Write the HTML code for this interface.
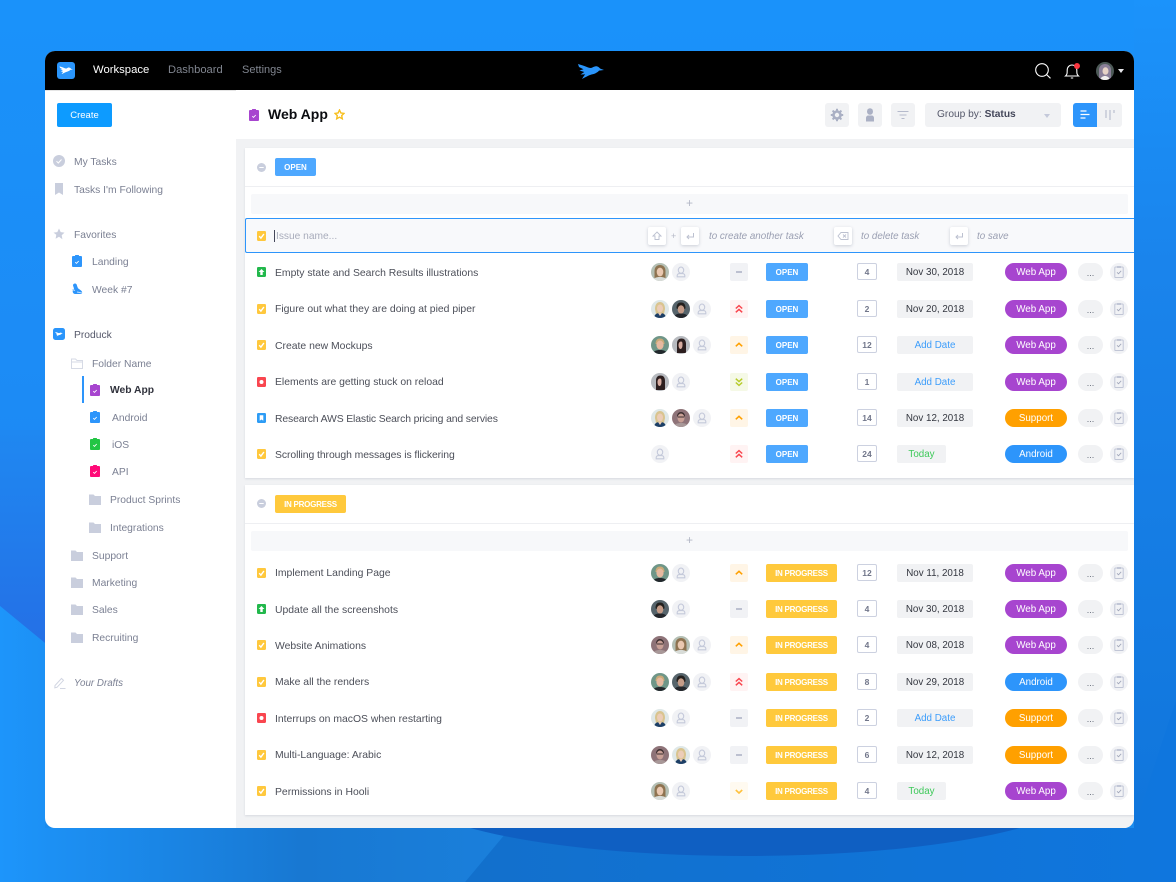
<!DOCTYPE html>
<html lang="en"><head><meta charset="utf-8"><title>Web App</title>
<style>
html,body{margin:0;padding:0}
body{width:1176px;height:882px;position:relative;overflow:hidden;background:#1b92f8;font-family:"Liberation Sans",sans-serif;font-size:10.4px;color:#4a4d57}
.bg{position:absolute;left:0;top:0}
.a{position:absolute}
.card{position:absolute;left:45px;top:51px;width:1089px;height:777px;border-radius:10px;background:#fff;overflow:hidden}
.page{position:absolute;left:0;top:0;width:1176px;height:882px}
.t{position:absolute;white-space:nowrap;line-height:16px}
.side{font-size:10.3px;color:#7b8093}
.side .t{margin-top:2px}
.r{position:absolute;left:0;width:1176px;height:18px}
.r>*{position:absolute}
.n{left:275px;top:2px;line-height:16px;white-space:nowrap;color:#4c4f59;font-size:10.4px}
.r>.d{top:3px}
.s{left:257px;top:4px;width:9px;height:10px}
.av{top:0;width:18px;height:18px}
.pr{left:730px;top:0;width:18px;height:18px;border-radius:2px}
.st{left:766px;top:0;height:18px;line-height:19px;border-radius:2px;color:#fff;font-size:8px;font-weight:bold;text-align:center}
.op{width:42px;background:#4ea8ff}
.ip{width:71px;background:#ffc93c;letter-spacing:-.25px}
.ct{left:857px;top:0;width:18px;height:15px;line-height:16px;border:1.5px solid #ccd1e0;border-radius:2px;text-align:center;color:#71768a;font-size:8.5px;font-weight:bold;background:#fff}
.dt{left:897px;top:0;height:18px;width:76px;line-height:19px;background:#f1f2f4;border-radius:2px;text-align:center;color:#33363f;font-size:9.8px}
.ad{color:#3c9dfb}
.td{color:#3ec95a;width:49px}
.tg{left:1005px;top:0;width:62px;height:18px;line-height:19px;border-radius:9px;color:#fff;text-align:center;font-size:9.8px}
.wa{background:#a745cf}.su{background:#ffa000}.an{background:#2d95fb}
.dd{left:1078px;top:0;width:25px;height:18px;line-height:20px;border-radius:9px;background:#f1f2f4;text-align:center;color:#666b7a;font-size:9px}
.cl{left:1110px;top:0;width:18px;height:18px}
.kb{position:absolute;top:227px;width:18px;height:18px;border-radius:2px;background:#fff;box-shadow:0 1px 3px rgba(60,70,100,.24)}
.hint{position:absolute;top:229px;line-height:16px;font-style:italic;color:#9a9fb2;font-size:9.8px;white-space:nowrap}
.panel{position:absolute;left:245px;width:889px;background:#fff;box-shadow:0 1px 2px rgba(60,70,100,.14)}
.add{position:absolute;left:251px;width:877px;height:20px;background:#f7f8fa;border-radius:2px;color:#b4b8c6;text-align:center;line-height:19px;font-size:12px}
.hb{position:absolute;top:103px;width:24px;height:24px;background:#f1f2f4;border-radius:3px}
</style></head><body>

<svg class="bg" width="1176" height="882" viewBox="0 0 1176 882">
<defs>
<linearGradient id="g0" x1="0" y1="0" x2="0" y2="1"><stop offset="0" stop-color="#1a92fa"/><stop offset=".65" stop-color="#1d88f3"/><stop offset="1" stop-color="#1b8ded"/></linearGradient>
<linearGradient id="g1" gradientUnits="userSpaceOnUse" x1="0" y1="0" x2="520" y2="0"><stop offset="0" stop-color="#1d95fb"/><stop offset=".58" stop-color="#1878d2"/><stop offset="1" stop-color="#1a80dc"/></linearGradient>
<linearGradient id="g2" x1="0" y1="0" x2="1" y2="0"><stop offset="0" stop-color="#1270cc"/><stop offset="1" stop-color="#0f76de"/></linearGradient>
<linearGradient id="g3" x1="0" y1="0" x2="0" y2="1"><stop offset="0" stop-color="#1f88f1"/><stop offset="1" stop-color="#2470e6"/></linearGradient>
<linearGradient id="g4" x1="0" y1="0" x2="0" y2="1"><stop offset="0" stop-color="#1b93fb"/><stop offset=".3" stop-color="#1a84ec"/><stop offset="1" stop-color="#0f74da"/></linearGradient>
</defs>
<rect width="1176" height="882" fill="url(#g0)"/>
<rect x="1134" y="0" width="42" height="882" fill="url(#g4)"/>
<polygon points="0,430 45,430 45,643 0,606" fill="url(#g3)"/>
<polygon points="0,606 45,643 45,828 510,828 465,882 0,882" fill="url(#g1)"/>
<polygon points="510,828 1134,828 1176,700 1176,882 465,882" fill="url(#g2)"/>
<ellipse cx="745" cy="790" rx="336" ry="66" fill="#0f5fc2"/>
</svg>

<svg width="0" height="0" style="position:absolute"><defs>
<symbol id="ck" viewBox="0 0 9 10"><rect width="9" height="10" rx="1.2" fill="#ffc83d"/><path d="M2.2 5.2l1.700 1.900L6.900 3" fill="none" stroke="#fff" stroke-width="1.400"/></symbol>
<symbol id="up" viewBox="0 0 9 10"><rect width="9" height="10" rx="1.2" fill="#22b84c"/><path d="M4.500 2L7.400 5H5.700v3H3.300V5H1.600z" fill="#fff"/></symbol>
<symbol id="bg" viewBox="0 0 9 10"><rect width="9" height="10" rx="1.2" fill="#f9464f"/><circle cx="4.500" cy="5" r="2" fill="#fff"/></symbol>
<symbol id="bk" viewBox="0 0 9 10"><rect width="9" height="10" rx="1.2" fill="#2d9cf5"/><path d="M2.700 2.200h3.600v5.600L4.500 6.500 2.700 7.800z" fill="#fff"/></symbol>
<symbol id="u" viewBox="0 0 18 18"><circle cx="9" cy="9" r="9" fill="#f1f2f5"/><ellipse cx="9" cy="7.200" rx="2.700" ry="3.100" fill="none" stroke="#c4c9da" stroke-width="1.100"/><path d="M5.200 13.800v-1.300c0-1.200 1.200-1.900 2.300-1.900h3c1.100 0 2.300.7 2.300 1.900v1.300z" fill="none" stroke="#c4c9da" stroke-width="1.100"/></symbol>
<symbol id="a1" viewBox="0 0 18 18"><clipPath id="c1"><circle cx="9" cy="9" r="9"/></clipPath><g clip-path="url(#c1)"><rect width="18" height="18" fill="#dfe8e8"/><path d="M4 9c0-5 2.500-7 5-7s5 2 5 7l-1 5H5z" fill="#d9c48f"/><ellipse cx="9" cy="8.500" rx="3" ry="4" fill="#eccdb8"/><path d="M3 18c.5-4 3-5 6-5s5.500 1 6 5z" fill="#1d3f66"/><path d="M7 13l2 3 2-3z" fill="#eccdb8"/></g></symbol>
<symbol id="a2" viewBox="0 0 18 18"><clipPath id="c2"><circle cx="9" cy="9" r="9"/></clipPath><g clip-path="url(#c2)"><rect width="18" height="18" fill="#56646b"/><path d="M4.500 8c0-4 2-5.500 4.500-5.500S13.500 4 13.500 8l-.5 1H5z" fill="#23201e"/><ellipse cx="9" cy="9.500" rx="3.300" ry="4.300" fill="#c59c88"/><path d="M2 18c.5-3.500 3-4.500 7-4.500s6.500 1 7 4.500z" fill="#23262b"/></g></symbol>
<symbol id="a3" viewBox="0 0 18 18"><clipPath id="c3"><circle cx="9" cy="9" r="9"/></clipPath><g clip-path="url(#c3)"><rect width="18" height="18" fill="#6f9688"/><path d="M4.500 8c0-4 2-5.500 4.500-5.500S13.500 4 13.500 8z" fill="#c9a977"/><ellipse cx="9" cy="9" rx="3.600" ry="4.500" fill="#e6b9a0"/><path d="M2 18c.5-3 3-4 7-4s6.500 1 7 4z" fill="#22282c"/></g></symbol>
<symbol id="a4" viewBox="0 0 18 18"><clipPath id="c4"><circle cx="9" cy="9" r="9"/></clipPath><g clip-path="url(#c4)"><rect width="18" height="18" fill="#b7babf"/><path d="M5 17V7.500C5 4 7 2.500 9.500 2.500S14 4 14 8v9z" fill="#2c1e1e"/><path d="M6.500 9c0-2 1-3.500 2.500-3.500S10.500 7 10.500 9 9.800 13 8.500 13 6.500 11 6.500 9z" fill="#d8aca0"/></g></symbol>
<symbol id="a5" viewBox="0 0 18 18"><clipPath id="c5"><circle cx="9" cy="9" r="9"/></clipPath><g clip-path="url(#c5)"><rect width="18" height="18" fill="#8e7378"/><path d="M5 7.500C5 4.500 7 3 9 3s4 1.500 4 4.500z" fill="#3d2f30"/><ellipse cx="9" cy="9" rx="3.500" ry="4.500" fill="#c9a096"/><path d="M5.800 8h6.400" stroke="#3a2e30" stroke-width="1"/><path d="M2 18c.5-3 3-4 7-4s6.500 1 7 4z" fill="#a89898"/></g></symbol>
<symbol id="a6" viewBox="0 0 18 18"><clipPath id="c6"><circle cx="9" cy="9" r="9"/></clipPath><g clip-path="url(#c6)"><rect width="18" height="18" fill="#b4bfb4"/><path d="M3.500 15V8c0-4 2.500-6 5.500-6s5.500 2 5.500 6v7z" fill="#8e7350"/><ellipse cx="9" cy="9" rx="3.300" ry="4.400" fill="#eac8b0"/><path d="M2 18c.5-3 3-4 7-4s6.500 1 7 4z" fill="#d8dcd8"/></g></symbol>
<symbol id="a7" viewBox="0 0 18 18"><clipPath id="c7"><circle cx="9" cy="9" r="9"/></clipPath><g clip-path="url(#c7)"><rect width="18" height="18" fill="#4d5a58"/><path d="M3 18V8c0-4 3-6 6-6s6 2 6 6v10z" fill="#8a7f98"/><ellipse cx="9.500" cy="9" rx="3" ry="3.800" fill="#e6d2c6"/><path d="M4 18c1-3 3-4 5-4s4 1 5 4z" fill="#f2f0ee"/></g></symbol>
<symbol id="cl" viewBox="0 0 18 18"><circle cx="9" cy="9" r="9" fill="#f1f2f5"/><rect x="4.800" y="4" width="8.400" height="10.500" rx=".8" fill="none" stroke="#c1c6d6" stroke-width="1"/><rect x="7" y="3" width="4" height="2" fill="#c1c6d6"/><path d="M7 9.300l1.500 1.500 2.700-3" fill="none" stroke="#9ea4b8" stroke-width=".8"/></symbol>
<symbol id="fd" viewBox="0 0 12 11"><path d="M0 .5h4.500L6 2h6v9H0z" fill="#c9cedd"/></symbol>
<symbol id="cb" viewBox="0 0 10 12"><rect y="1" width="10" height="11" rx="1" fill="currentColor"/><rect x="3" width="4" height="2.500" rx=".6" fill="currentColor"/><path d="M3.300 7.200l1.200 1.200 2.200-2.400" fill="none" stroke="#fff" stroke-width=".9"/></symbol>
<symbol id="bd" viewBox="0 0 27 16"><path d="M1 1C4 2 8 3 10.500 4.300 12 5 13.500 5.200 15 4.800 16.500 3.800 18.500 3 20 3.400 21.500 3.800 22.500 5 23.500 5.800L27 7l-5 .6C20.500 9.500 17.500 11 14.500 11.500 11 12.500 8 14.500 5 16c1-1.800 2-3.200 3.200-4.600L3.500 11.500 7.300 9 2.500 7.500 6.500 6.200 2 4z" fill="currentColor"/></symbol>
<symbol id="pd" viewBox="0 0 18 18"><path d="M6 9h6" stroke="#aab0c4" stroke-width="1.600"/></symbol>
<symbol id="p2" viewBox="0 0 18 18"><path d="M5.800 8.500L9 5.600l3.200 2.900M5.800 12.300L9 9.400l3.200 2.900" fill="none" stroke="#f9464f" stroke-width="1.500"/></symbol>
<symbol id="p1" viewBox="0 0 18 18"><path d="M5.800 10.300L9 7.300l3.200 3" fill="none" stroke="#ffa000" stroke-width="1.600"/></symbol>
<symbol id="pn" viewBox="0 0 18 18"><path d="M5.800 8L9 11l3.200-3" fill="none" stroke="#ffc13d" stroke-width="1.600"/></symbol>
<symbol id="pg" viewBox="0 0 18 18"><path d="M5.800 5.700L9 8.600l3.200-2.900M5.800 9.500L9 12.400l3.200-2.900" fill="none" stroke="#b7cc2c" stroke-width="1.500"/></symbol>
</defs></svg>

<div class="card"></div>
<div class="page" style="clip-path:inset(51px 42px 54px 45px round 10px)">
<div class="a" style="left:236px;top:139px;width:898px;height:689px;background:#f1f2f4"></div>

<!-- NAV -->
<div class="a" style="left:45px;top:51px;width:1089px;height:39px;background:#000"></div>
<div class="a" style="left:45px;top:90px;width:191px;height:1px;background:#e5e5e5"></div>
<div class="a" style="left:57px;top:62px;width:18px;height:17px;border-radius:3px;background:#2a95fb"></div>
<svg class="a" style="left:59px;top:65px;color:#fff" width="14" height="10"><use href="#bd" width="14" height="10"/></svg>
<div class="t" style="left:93px;top:62px;color:#fff;font-size:11.3px">Workspace</div>
<div class="t" style="left:168px;top:62px;color:#80858f;font-size:11.2px">Dashboard</div>
<div class="t" style="left:242px;top:62px;color:#80858f;font-size:11px">Settings</div>
<svg class="a" style="left:577px;top:63px;color:#2a95fb" width="27" height="16"><use href="#bd" width="27" height="16"/></svg>
<svg class="a" style="left:1034px;top:62px" width="18" height="18" fill="none" stroke="#fff" stroke-width="1.100"><circle cx="8" cy="8" r="6.300"/><path d="M12.600 12.600L16.500 16.300"/></svg>
<svg class="a" style="left:1064px;top:62px" width="17" height="18" fill="none" stroke="#fff" stroke-width="1.100"><path d="M1.500 14c1.700-1.500 1.700-3 1.700-5.800C3.200 5 5.500 3 8 3s4.800 2 4.800 5.200c0 2.800 0 4.300 1.700 5.800z"/><path d="M6.800 16h2.400"/></svg>
<div class="a" style="left:1074px;top:63px;width:6px;height:6px;border-radius:50%;background:#f9363f"></div>
<svg class="a" style="left:1096px;top:62px" width="18" height="18"><use href="#a7" width="18" height="18"/></svg>
<div class="a" style="left:1118px;top:69px;width:0;height:0;border-left:3px solid transparent;border-right:3px solid transparent;border-top:4px solid #e8e8ec"></div>

<!-- SIDEBAR -->
<div class="a" style="left:57px;top:103px;width:55px;height:24px;background:#0d9bff;border-radius:2px;color:#fff;text-align:center;line-height:25px;font-size:9.5px">Create</div>
<div class="side">
<svg class="a" style="left:53px;top:155px" width="12" height="12"><circle cx="6" cy="6" r="6" fill="#c9cedd"/><path d="M3.500 6.200l1.800 1.800 3.200-3.500" fill="none" stroke="#fff" stroke-width="1"/></svg>
<div class="t" style="left:74px;top:153px">My Tasks</div>
<svg class="a" style="left:55px;top:183px" width="8" height="12"><path d="M0 0h8v12L4 9.500 0 12z" fill="#c9cedd"/></svg>
<div class="t" style="left:74px;top:181px">Tasks I'm Following</div>
<svg class="a" style="left:53px;top:228px" width="12" height="12"><path d="M6 .5l1.700 3.600 3.800.5-2.800 2.700.7 3.900L6 8.800 2.600 10.700l.7-3.900L.5 4.600l3.800-.5z" fill="#c9cedd"/></svg>
<div class="t" style="left:74px;top:226px">Favorites</div>
<svg class="a" style="left:72px;top:255px;color:#2d95fb" width="10" height="12"><use href="#cb" width="10" height="12"/></svg>
<div class="t" style="left:92px;top:253px">Landing</div>
<svg class="a" style="left:71px;top:283px" width="12" height="12"><path d="M2 2.500C2 1 3 .5 4 .5S6 1.500 6 2.800l1 2.500 3 2.200c1.500 1 1.500 3.500 0 3.500H4C2.500 11 1 9 2 7l1-1.500z" fill="#2d95fb"/><path d="M1 6.500l3 1M6 9l5 1" stroke="#bfe0ff" stroke-width="1"/></svg>
<div class="t" style="left:92px;top:281px">Week #7</div>
<div class="a" style="left:53px;top:328px;width:12px;height:12px;border-radius:2.500px;background:#2a95fb"></div>
<svg class="a" style="left:55px;top:331px;color:#fff" width="8" height="6"><use href="#bd" width="8" height="6"/></svg>
<div class="t" style="left:74px;top:326px;color:#55586a">Produck</div>
<svg class="a" style="left:71px;top:358px" width="12" height="11" fill="none" stroke="#d6dae5" stroke-width="1"><path d="M.5 10.500V1h4L6 2.500h5.500v8zM.5 4h11"/></svg>
<div class="t" style="left:92px;top:355px">Folder Name</div>
<div class="a" style="left:82px;top:376px;width:1.500px;height:27px;background:#2d95fb"></div>
<svg class="a" style="left:90px;top:384px;color:#a745cf" width="10" height="12"><use href="#cb" width="10" height="12"/></svg>
<div class="t" style="left:110px;top:381px;color:#30323c;font-weight:bold;font-size:10.3px">Web App</div>
<svg class="a" style="left:90px;top:411px;color:#2d95fb" width="10" height="12"><use href="#cb" width="10" height="12"/></svg>
<div class="t" style="left:112px;top:409px">Android</div>
<svg class="a" style="left:90px;top:438px;color:#22c544" width="10" height="12"><use href="#cb" width="10" height="12"/></svg>
<div class="t" style="left:112px;top:436px">iOS</div>
<svg class="a" style="left:90px;top:465px;color:#ff0a78" width="10" height="12"><use href="#cb" width="10" height="12"/></svg>
<div class="t" style="left:112px;top:463px">API</div>
<svg class="a" style="left:89px;top:494px" width="12" height="11"><use href="#fd" width="12" height="11"/></svg>
<div class="t" style="left:110px;top:491px">Product Sprints</div>
<svg class="a" style="left:89px;top:522px" width="12" height="11"><use href="#fd" width="12" height="11"/></svg>
<div class="t" style="left:110px;top:519px">Integrations</div>
<svg class="a" style="left:71px;top:550px" width="12" height="11"><use href="#fd" width="12" height="11"/></svg>
<div class="t" style="left:92px;top:547px">Support</div>
<svg class="a" style="left:71px;top:577px" width="12" height="11"><use href="#fd" width="12" height="11"/></svg>
<div class="t" style="left:92px;top:574px">Marketing</div>
<svg class="a" style="left:71px;top:604px" width="12" height="11"><use href="#fd" width="12" height="11"/></svg>
<div class="t" style="left:92px;top:601px">Sales</div>
<svg class="a" style="left:71px;top:632px" width="12" height="11"><use href="#fd" width="12" height="11"/></svg>
<div class="t" style="left:92px;top:629px">Recruiting</div>
<svg class="a" style="left:54px;top:677px" width="12" height="12" fill="none" stroke="#d2d6e2" stroke-width="1"><path d="M1 8.500L7.500 1.500l2 1.800-6.500 7L.8 10.800zM6 11.500h5.500"/></svg>
<div class="t" style="left:74px;top:674px;font-style:italic;font-size:9.8px">Your Drafts</div>
</div>

<!-- HEADER -->
<svg class="a" style="left:249px;top:109px;color:#a745cf" width="10" height="12"><use href="#cb" width="10" height="12"/></svg>
<div class="t" style="left:268px;top:106px;color:#0b0c10;font-size:14px;font-weight:bold">Web App</div>
<svg class="a" style="left:334px;top:109px" width="11" height="11"><path d="M5.500 1l1.400 3 3.100.4-2.300 2.200.6 3.200-2.800-1.600-2.800 1.600.6-3.200L1 4.400 4.100 4z" fill="none" stroke="#f7bf1f" stroke-width="1.400"/></svg>
<div class="hb" style="left:825px"></div>
<svg class="a" style="left:830px;top:108px" width="14" height="14"><circle cx="7" cy="7" r="3.500" fill="none" stroke="#aab0c4" stroke-width="2.600"/><path d="M7 .8v2.400M7 10.800v2.400M.8 7h2.400M10.800 7h2.400M2.600 2.600l1.700 1.700M9.700 9.700l1.700 1.700M2.600 11.400l1.700-1.700M9.700 4.300l1.700-1.700" stroke="#aab0c4" stroke-width="2"/></svg>
<div class="hb" style="left:858px"></div>
<svg class="a" style="left:865px;top:108px" width="10" height="14"><ellipse cx="5" cy="3.500" rx="3" ry="3.300" fill="#aab0c4"/><path d="M1 13.500V10c0-1.500 1-2.500 2.500-2.500h3C8 7.500 9 8.500 9 10v3.500z" fill="#aab0c4"/></svg>
<div class="hb" style="left:891px"></div>
<svg class="a" style="left:897px;top:110px" width="12" height="10" stroke="#b5bacc" stroke-width="1.100"><path d="M.5 1.500h11M2.500 5h7M4.500 8.500h3"/></svg>
<div class="hb" style="left:925px;width:136px"></div>
<div class="t" style="left:937px;top:107px;font-size:10.2px;color:#55586a">Group by: <b style="color:#44475a">Status</b></div>
<div class="a" style="left:1044px;top:114px;width:0;height:0;border-left:3px solid transparent;border-right:3px solid transparent;border-top:4px solid #c4c9da"></div>
<div class="hb" style="left:1073px;width:49px"></div>
<div class="a" style="left:1073px;top:103px;width:24px;height:24px;background:#2d95fb;border-radius:3px 0 0 3px"></div>
<svg class="a" style="left:1080px;top:110px" width="11" height="10" stroke="#fff" stroke-width="1.200"><path d="M.5 1h6M.5 4.500h9M.5 8h5"/></svg>
<svg class="a" style="left:1105px;top:109px" width="10" height="11" stroke="#b5bacc" stroke-width="1.100"><path d="M1 1v8M5 1v10M9 1v3"/></svg>

<!-- PANEL OPEN -->
<div class="panel" style="top:148px;height:330px"></div>
<div class="a" style="left:245px;top:186px;width:889px;height:1px;background:#eeeff2"></div>
<svg class="a" style="left:257px;top:163px" width="9" height="9"><circle cx="4.500" cy="4.500" r="4.500" fill="#c9cedd"/><path d="M2.300 4.500h4.400" stroke="#fff" stroke-width="1"/></svg>
<div class="a" style="left:275px;top:158px;width:41px;height:18px;background:#4ea8ff;border-radius:2px;color:#fff;text-align:center;line-height:20px;font-size:8px;font-weight:bold">OPEN</div>
<div class="add" style="top:194px">+</div>

<div class="a" style="left:245px;top:218px;width:889px;height:33px;background:#f8f9fb;border:1px solid #2d95fb;border-right:0;border-radius:2px 0 0 2px;box-sizing:content-box"></div>
<svg class="a" style="left:257px;top:231px" width="9" height="10"><use href="#ck" width="9" height="10"/></svg>
<div class="a" style="left:274px;top:230px;width:1px;height:12px;background:#44475a"></div>
<div class="t" style="left:276px;top:229px;color:#a8acbb;font-size:10.2px">Issue name...</div>
<div class="kb" style="left:648px"></div>
<svg class="a" style="left:652px;top:231px" width="10" height="10" fill="none" stroke="#bcc1d0" stroke-width=".9"><path d="M5 1L9 5H7v3.500H3V5H1z"/></svg>
<div class="t" style="left:671px;top:228px;color:#b4b8c6;font-size:9px">+</div>
<div class="kb" style="left:681px"></div>
<svg class="a" style="left:685px;top:231px" width="10" height="10" fill="none" stroke="#bcc1d0" stroke-width="1"><path d="M8.500 2v4H2M4 4L2 6l2 2"/></svg>
<div class="hint" style="left:709px">to create another task</div>
<div class="kb" style="left:834px"></div>
<svg class="a" style="left:837px;top:231px" width="12" height="10" fill="none" stroke="#bcc1d0" stroke-width=".9"><path d="M4 1.500h7v7H4L1 5zM6 3.500l3 3M9 3.500l-3 3"/></svg>
<div class="hint" style="left:861px">to delete task</div>
<div class="kb" style="left:950px"></div>
<svg class="a" style="left:954px;top:231px" width="10" height="10" fill="none" stroke="#bcc1d0" stroke-width="1"><path d="M8.500 2v4H2M4 4L2 6l2 2"/></svg>
<div class="hint" style="left:977px">to save</div>

<div class="r" style="top:263px"><svg class="s"><use href="#up" width="9" height="10"/></svg><div class="n d">Empty state and Search Results illustrations</div><svg class="av" style="left:651px"><use href="#a6" width="18" height="18"/></svg><svg class="av" style="left:672px"><use href="#u" width="18" height="18"/></svg><svg class="pr" style="background:#f1f2f5"><use href="#pd" width="18" height="18"/></svg><div class="st op">OPEN</div><div class="ct">4</div><div class="dt">Nov 30, 2018</div><div class="tg wa">Web App</div><div class="dd">...</div><svg class="cl"><use href="#cl" width="18" height="18"/></svg></div>
<div class="r" style="top:300px"><svg class="s"><use href="#ck" width="9" height="10"/></svg><div class="n">Figure out what they are doing at pied piper</div><svg class="av" style="left:651px"><use href="#a1" width="18" height="18"/></svg><svg class="av" style="left:672px"><use href="#a2" width="18" height="18"/></svg><svg class="av" style="left:693px"><use href="#u" width="18" height="18"/></svg><svg class="pr" style="background:#fff3f3"><use href="#p2" width="18" height="18"/></svg><div class="st op">OPEN</div><div class="ct">2</div><div class="dt">Nov 20, 2018</div><div class="tg wa">Web App</div><div class="dd">...</div><svg class="cl"><use href="#cl" width="18" height="18"/></svg></div>
<div class="r" style="top:336px"><svg class="s"><use href="#ck" width="9" height="10"/></svg><div class="n d">Create new Mockups</div><svg class="av" style="left:651px"><use href="#a3" width="18" height="18"/></svg><svg class="av" style="left:672px"><use href="#a4" width="18" height="18"/></svg><svg class="av" style="left:693px"><use href="#u" width="18" height="18"/></svg><svg class="pr" style="background:#fff5e6"><use href="#p1" width="18" height="18"/></svg><div class="st op">OPEN</div><div class="ct">12</div><div class="dt ad">Add Date</div><div class="tg wa">Web App</div><div class="dd">...</div><svg class="cl"><use href="#cl" width="18" height="18"/></svg></div>
<div class="r" style="top:373px"><svg class="s"><use href="#bg" width="9" height="10"/></svg><div class="n">Elements are getting stuck on reload</div><svg class="av" style="left:651px"><use href="#a4" width="18" height="18"/></svg><svg class="av" style="left:672px"><use href="#u" width="18" height="18"/></svg><svg class="pr" style="background:#f5f9e6"><use href="#pg" width="18" height="18"/></svg><div class="st op">OPEN</div><div class="ct">1</div><div class="dt ad">Add Date</div><div class="tg wa">Web App</div><div class="dd">...</div><svg class="cl"><use href="#cl" width="18" height="18"/></svg></div>
<div class="r" style="top:409px"><svg class="s"><use href="#bk" width="9" height="10"/></svg><div class="n d" style="letter-spacing:-.13px">Research AWS Elastic Search pricing and servies</div><svg class="av" style="left:651px"><use href="#a1" width="18" height="18"/></svg><svg class="av" style="left:672px"><use href="#a5" width="18" height="18"/></svg><svg class="av" style="left:693px"><use href="#u" width="18" height="18"/></svg><svg class="pr" style="background:#fff5e6"><use href="#p1" width="18" height="18"/></svg><div class="st op">OPEN</div><div class="ct">14</div><div class="dt">Nov 12, 2018</div><div class="tg su">Support</div><div class="dd">...</div><svg class="cl"><use href="#cl" width="18" height="18"/></svg></div>
<div class="r" style="top:445px"><svg class="s"><use href="#ck" width="9" height="10"/></svg><div class="n d" style="letter-spacing:-.07px">Scrolling through messages is flickering</div><svg class="av" style="left:651px"><use href="#u" width="18" height="18"/></svg><svg class="pr" style="background:#fff3f3"><use href="#p2" width="18" height="18"/></svg><div class="st op">OPEN</div><div class="ct">24</div><div class="dt td">Today</div><div class="tg an">Android</div><div class="dd">...</div><svg class="cl"><use href="#cl" width="18" height="18"/></svg></div>

<!-- PANEL IN PROGRESS -->
<div class="panel" style="top:485px;height:330px"></div>
<div class="a" style="left:245px;top:523px;width:889px;height:1px;background:#eeeff2"></div>
<svg class="a" style="left:257px;top:499px" width="9" height="9"><circle cx="4.500" cy="4.500" r="4.500" fill="#c9cedd"/><path d="M2.300 4.500h4.400" stroke="#fff" stroke-width="1"/></svg>
<div class="a" style="left:275px;top:495px;width:71px;height:18px;background:#ffc93c;border-radius:2px;color:#fff;text-align:center;line-height:19px;font-size:8px;font-weight:bold;letter-spacing:-.25px">IN PROGRESS</div>
<div class="add" style="top:531px">+</div>

<div class="r" style="top:564px"><svg class="s"><use href="#ck" width="9" height="10"/></svg><div class="n">Implement Landing Page</div><svg class="av" style="left:651px"><use href="#a3" width="18" height="18"/></svg><svg class="av" style="left:672px"><use href="#u" width="18" height="18"/></svg><svg class="pr" style="background:#fff5e6"><use href="#p1" width="18" height="18"/></svg><div class="st ip">IN PROGRESS</div><div class="ct">12</div><div class="dt">Nov 11, 2018</div><div class="tg wa">Web App</div><div class="dd">...</div><svg class="cl"><use href="#cl" width="18" height="18"/></svg></div>
<div class="r" style="top:600px"><svg class="s"><use href="#up" width="9" height="10"/></svg><div class="n d">Update all the screenshots</div><svg class="av" style="left:651px"><use href="#a2" width="18" height="18"/></svg><svg class="av" style="left:672px"><use href="#u" width="18" height="18"/></svg><svg class="pr" style="background:#f1f2f5"><use href="#pd" width="18" height="18"/></svg><div class="st ip">IN PROGRESS</div><div class="ct">4</div><div class="dt">Nov 30, 2018</div><div class="tg wa">Web App</div><div class="dd">...</div><svg class="cl"><use href="#cl" width="18" height="18"/></svg></div>
<div class="r" style="top:636px"><svg class="s"><use href="#ck" width="9" height="10"/></svg><div class="n d">Website Animations</div><svg class="av" style="left:651px"><use href="#a5" width="18" height="18"/></svg><svg class="av" style="left:672px"><use href="#a6" width="18" height="18"/></svg><svg class="av" style="left:693px"><use href="#u" width="18" height="18"/></svg><svg class="pr" style="background:#fff5e6"><use href="#p1" width="18" height="18"/></svg><div class="st ip">IN PROGRESS</div><div class="ct">4</div><div class="dt">Nov 08, 2018</div><div class="tg wa">Web App</div><div class="dd">...</div><svg class="cl"><use href="#cl" width="18" height="18"/></svg></div>
<div class="r" style="top:673px"><svg class="s"><use href="#ck" width="9" height="10"/></svg><div class="n">Make all the renders</div><svg class="av" style="left:651px"><use href="#a3" width="18" height="18"/></svg><svg class="av" style="left:672px"><use href="#a2" width="18" height="18"/></svg><svg class="av" style="left:693px"><use href="#u" width="18" height="18"/></svg><svg class="pr" style="background:#fff3f3"><use href="#p2" width="18" height="18"/></svg><div class="st ip">IN PROGRESS</div><div class="ct">8</div><div class="dt">Nov 29, 2018</div><div class="tg an">Android</div><div class="dd">...</div><svg class="cl"><use href="#cl" width="18" height="18"/></svg></div>
<div class="r" style="top:709px"><svg class="s"><use href="#bg" width="9" height="10"/></svg><div class="n d">Interrups on macOS when restarting</div><svg class="av" style="left:651px"><use href="#a1" width="18" height="18"/></svg><svg class="av" style="left:672px"><use href="#u" width="18" height="18"/></svg><svg class="pr" style="background:#f1f2f5"><use href="#pd" width="18" height="18"/></svg><div class="st ip">IN PROGRESS</div><div class="ct">2</div><div class="dt ad">Add Date</div><div class="tg su">Support</div><div class="dd">...</div><svg class="cl"><use href="#cl" width="18" height="18"/></svg></div>
<div class="r" style="top:746px"><svg class="s"><use href="#ck" width="9" height="10"/></svg><div class="n">Multi-Language: Arabic</div><svg class="av" style="left:651px"><use href="#a5" width="18" height="18"/></svg><svg class="av" style="left:672px"><use href="#a1" width="18" height="18"/></svg><svg class="av" style="left:693px"><use href="#u" width="18" height="18"/></svg><svg class="pr" style="background:#f1f2f5"><use href="#pd" width="18" height="18"/></svg><div class="st ip">IN PROGRESS</div><div class="ct">6</div><div class="dt">Nov 12, 2018</div><div class="tg su">Support</div><div class="dd">...</div><svg class="cl"><use href="#cl" width="18" height="18"/></svg></div>
<div class="r" style="top:782px"><svg class="s"><use href="#ck" width="9" height="10"/></svg><div class="n d">Permissions in Hooli</div><svg class="av" style="left:651px"><use href="#a6" width="18" height="18"/></svg><svg class="av" style="left:672px"><use href="#u" width="18" height="18"/></svg><svg class="pr" style="background:#fffaf0"><use href="#pn" width="18" height="18"/></svg><div class="st ip">IN PROGRESS</div><div class="ct">4</div><div class="dt td">Today</div><div class="tg wa">Web App</div><div class="dd">...</div><svg class="cl"><use href="#cl" width="18" height="18"/></svg></div>
</div>
</body></html>
